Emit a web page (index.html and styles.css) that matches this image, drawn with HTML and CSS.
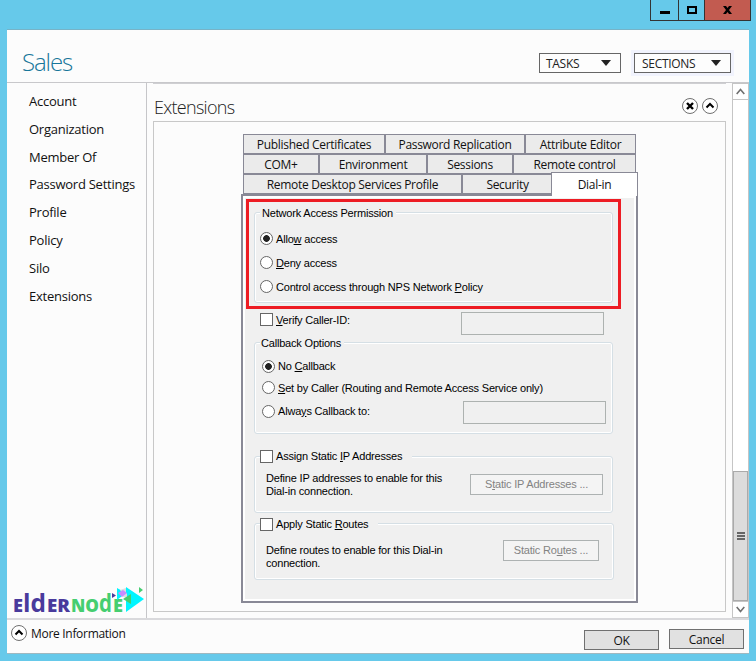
FILE: index.html
```html
<!DOCTYPE html>
<html lang="en">
<head>
<meta charset="utf-8">
<title>Sales</title>
<link rel="stylesheet" href="styles.css">
</head>
<body>
<div class="titlebar">
  <div class="caption min"><svg width="10" height="4"><path d="M0 0h10v3H0z"/></svg></div>
  <div class="caption max"><svg width="10" height="8"><path d="M1 1h8v6h-8z" fill="none" stroke="#000" stroke-width="2"/></svg></div>
  <div class="caption close"><svg width="9" height="8"><path d="M0 0h3l1.500 2L6 0h3L6 4l3 4H6L4.500 6 3 8H0l3-4z"/></svg></div>
</div>
<div class="window">
  <header class="header">
    <h1 class="title">Sales</h1>
    <div class="menu tasks"><span>TASKS</span><i class="arrow"></i></div>
    <div class="menu sections"><span>SECTIONS</span><i class="arrow"></i></div>
  </header>
  <div class="body">
    <nav class="sidebar">
      <a>Account</a><a>Organization</a><a>Member Of</a><a>Password Settings</a><a>Profile</a><a>Policy</a><a>Silo</a><a>Extensions</a>
      <svg class="logo" width="134" height="30" viewBox="0 0 134 30">
        <g class="elder">
          <text x="2" y="25" textLength="10" lengthAdjust="spacingAndGlyphs">E</text>
          <text class="tall" x="12" y="25" textLength="23" lengthAdjust="spacingAndGlyphs">ld</text>
          <text x="36" y="25" textLength="23" lengthAdjust="spacingAndGlyphs">ER</text>
        </g>
        <g class="node">
          <text x="60" y="25" textLength="28" lengthAdjust="spacingAndGlyphs">NO</text>
          <text class="tall" x="88" y="25" textLength="13" lengthAdjust="spacingAndGlyphs">d</text>
          <text x="102" y="25" textLength="10" lengthAdjust="spacingAndGlyphs">E</text>
        </g>
        <path fill="#00f5ff" d="M106 1l9 5-9 7zM115 0l18 12-18 13z"/>
        <path fill="#d8dfe2" d="M109 3l6-2v5l-3 1zM111 9l5-3v6z"/>
        <path fill="#c78cff" d="M107 6l5-3 4 3-5 4z"/>
        <path fill="#45ce70" d="M112 12l8-5v10zM128 0l4 3-4 3z"/>
        <path fill="#493a9c" d="M101 6l4 2.500-4 2.500z"/>
      </svg>
    </nav>
    <main class="content">
      <div class="section-head">
        <h2>Extensions</h2>
        <svg class="round" width="18" height="18"><circle cx="9" cy="9" r="7.500" fill="#fff" stroke="#707070"/><path d="M6 6l6 6M12 6l-6 6" stroke="#000" stroke-width="2.400"/></svg>
        <svg class="round" width="18" height="18"><circle cx="9" cy="9" r="7.500" fill="#fff" stroke="#707070"/><path d="M5.500 10.500L9 7l3.500 3.500" fill="none" stroke="#000" stroke-width="2"/></svg>
      </div>
      <section class="card">
        <div class="tabs">
          <div class="tabrow r1"><div>Published Certificates</div><div>Password Replication</div><div>Attribute Editor</div></div>
          <div class="tabrow r2"><div>COM+</div><div>Environment</div><div>Sessions</div><div>Remote control</div></div>
          <div class="tabrow r3"><div>Remote Desktop Services Profile</div><div>Security</div><div class="active">Dial-in</div></div>
        </div>
        <div class="panel">
          <div class="highlight">
            <div class="group permission">
              <div class="legend">Network Access Permission</div>
              <div class="option"><i class="radio on"></i><span>Allo<u>w</u> access</span></div>
              <div class="option"><i class="radio"></i><span><u>D</u>eny access</span></div>
              <div class="option"><i class="radio"></i><span>Control access through NPS Network <u>P</u>olicy</span></div>
            </div>
          </div>
          <div class="verify"><i class="check"></i><span><u>V</u>erify Caller-ID:</span><div class="field"></div></div>
          <div class="group callback">
            <div class="legend">Callback Options</div>
            <div class="option o1"><i class="radio on"></i><span>No <u>C</u>allback</span></div>
            <div class="option o2"><i class="radio"></i><span><u>S</u>et by Caller (Routing and Remote Access Service only)</span></div>
            <div class="option o3"><i class="radio"></i><span>Alwa<u>y</u>s Callback to:</span><div class="field"></div></div>
          </div>
          <div class="group ip">
            <div class="legend boxed"><i class="check"></i><span>Assign Static <u>I</u>P Addresses</span></div>
            <div class="detail"><p>Define IP addresses to enable for this<br>Dial-in connection.</p><div class="btn off">S<u>t</u>atic IP Addresses ...</div></div>
          </div>
          <div class="group routes">
            <div class="legend boxed"><i class="check"></i><span>Apply Static <u>R</u>outes</span></div>
            <div class="detail"><p>Define routes to enable for this Dial-in<br>connection.</p><div class="btn off">Static Ro<u>u</u>tes ...</div></div>
          </div>
        </div>
      </section>
    </main>
    <div class="scrollbar">
      <div class="sb"><svg width="9" height="7"><path d="M.7 6L4.500 1.500 8.300 6" fill="none" stroke="#707070" stroke-width="1.600"/></svg></div>
      <div class="track"></div>
      <div class="thumb"><i></i><i></i><i></i></div>
      <div class="sb"><svg width="9" height="7"><path d="M.7 1L4.500 5.500 8.300 1" fill="none" stroke="#707070" stroke-width="1.600"/></svg></div>
    </div>
  </div>
  <footer class="footer">
    <svg class="info-icon" width="18" height="18"><circle cx="9" cy="9" r="7.500" fill="#fff" stroke="#707070"/><path d="M5.500 10.500L9 7l3.500 3.500" fill="none" stroke="#000" stroke-width="2"/></svg>
    <span class="info">More Information</span>
    <div class="btn ok">OK</div>
    <div class="btn cancel">Cancel</div>
  </footer>
</div>
</body>
</html>
```
FILE: styles.css
```css
* { box-sizing: border-box; }
body { margin: 0; width: 756px; height: 661px; overflow: hidden; background: #66c9ea; color: #111; font: 12px/16px "Open Sans", sans-serif; letter-spacing: -.3px; }
h1, h2, p { margin: 0; font-weight: 300; }
p { font-weight: 400; }
svg { display: block; }
.titlebar { height: 29px; display: flex; justify-content: flex-end; padding-right: 5px; }
.caption { height: 21px; border: 1px solid #333; border-top: 0; border-right: 0; display: flex; align-items: center; justify-content: center; }
.min { width: 28px; padding-top: 5px; }
.max { width: 26px; }
.close { width: 47px; background: #c25b50; border-right: 1px solid #333; }
.window { width: 742px; height: 625px; margin-left: 7px; background: #fcfcfc; border-top: 1px solid #77b3c7; border-bottom: 1px solid #9fb8c0; }
.header { height: 53px; display: flex; align-items: flex-start; padding-left: 15px; border-bottom: 1px solid #c8c8cb; }
.title { flex: 1; font-size: 24px; line-height: 34px; margin-top: 15px; color: #17769a; letter-spacing: -1.1px; }
.menu { height: 20px; margin-top: 23px; border: 1px solid #666; background: #fdfdfd; display: flex; align-items: center; justify-content: space-between; padding: 0 9px 0 6px; color: #222; }
.tasks { width: 82px; }
.sections { width: 97px; margin: 23px 18px 0 13px; padding-left: 7px; box-shadow: 0 0 0 3px #f1f3fd; }
.arrow { border: 5px solid transparent; border-top: 6px solid #222; border-bottom: 0; }
.menu span { padding-top: 2px; }
.body { height: 535px; display: flex; }
.sidebar { width: 140px; border-right: 1px solid #c6c6c9; padding: 5px 0 0 22px; display: flex; flex-direction: column; }
.sidebar a { height: 27.800px; line-height: 27px; font-size: 13px; letter-spacing: -.25px; white-space: nowrap; }
.logo { margin: 277px 0 0 -18px; flex: none; overflow: visible; font: 800 18px "Open Sans", sans-serif; letter-spacing: 0; }
.logo .tall { font-size: 25px; font-weight: 700; }
.elder { fill: #493a9c; }
.node { fill: #45ce70; }
.content { width: 585px; padding-left: 6px; }
.section-head { width: 573px; height: 38px; border-top: 1px solid #cfcfd2; display: flex; padding: 13px 7px 0 1px; }
.section-head h2 { flex: 1; font-size: 18px; line-height: 22px; margin-top: -1px; color: #222; letter-spacing: -.7px; }
.round { margin-left: 2px; }
.card { width: 573px; height: 491px; border: 1px solid #c8c8c8; padding: 12px 0 0 87px; }
.tabs { width: 397px; padding-left: 2px; height: 60px; }
.tabrow { display: flex; height: 20px; width: 393px; background: #ebebeb; border: 1px solid #898996; }
.tabrow div { flex: none; height: 19px; line-height: 20px; text-align: center; border-left: 2px solid #898996; white-space: nowrap; }
.tabrow div:first-child { border-left: 0; }
.r1 div:nth-child(1) { width: 140px; }
.r1 div:nth-child(2) { width: 140px; }
.r1 div:nth-child(3) { width: 111px; }
.r2 div:nth-child(1) { width: 74px; }
.r2 div:nth-child(2) { width: 108px; }
.r2 div:nth-child(3) { width: 86px; }
.r2 div:nth-child(4) { width: 123px; }
.r3 div:nth-child(1) { width: 217px; }
.r3 div:nth-child(2) { width: 91px; }
.tabrow .active { width: 87px; height: 24px; line-height: 24px; margin: -3px 0 0 -1px; background: #fff; border: 1px solid #898996; border-bottom: 0; position: relative; z-index: 1; }
.panel { width: 397px; height: 409px; border: 2px solid #898996; background: #f0f0f0; box-shadow: inset 0 0 0 2px #fff; padding: 3px; font: 11px/13px "Liberation Sans", sans-serif; color: #000; letter-spacing: -.19px; }
.highlight { width: 375px; height: 110px; border: 3px solid #ed1c24; padding: 10px 0 0 5px; }
.group { width: 359px; border: 1px solid #d5dfe5; border-radius: 3px; box-shadow: inset 0 0 0 1px #fff; margin-left: 8px; }
.permission { height: 91px; margin-left: 0; }
.legend { width: fit-content; height: 14px; margin: -7px 0 0 5px; padding: 0 3px 0 2px; background: #f0f0f0; display: flex; align-items: center; line-height: 14px; white-space: nowrap; }
.option { display: flex; align-items: center; height: 24px; padding-left: 5px; white-space: nowrap; }
.permission .legend { margin-bottom: 6px; }
.permission span { padding-top: 2px; }
.radio { width: 13px; height: 13px; border: 1px solid #666; border-radius: 50%; background: #fff; margin-right: 3px; flex: none; }
.on { background: radial-gradient(circle, #222 3px, #fff 3.700px); }
.check { width: 13px; height: 13px; border: 1px solid #666; background: #fff; margin-right: 3px; flex: none; }
.verify { display: flex; height: 24px; margin: 3px 0 0 14px; padding-top: 1px; }
.verify span { flex: 1; line-height: 15px; }
.field { width: 143px; height: 23px; border: 1px solid #adb2b0; }
.verify .field { margin: -1px 29px 0 0; height: 23px; }
.callback { height: 92px; margin-top: 6px; }
.callback .legend { padding-left: 1px; }
.callback .option { padding-left: 7px; }
.callback .o1 { height: 22px; margin-top: 5px; }
.callback .o2 { height: 21px; }
.callback .o2 span, .callback .o1 span { padding-top: 1px; }
.callback .o3 { height: 26px; padding-right: 6px; }
.o3 span { flex: 1; padding-top: 1px; }
.o3 .field { margin-top: 2px; }
.ip { height: 57px; margin-top: 22px; }
.boxed { margin-top: -8px; padding-right: 10px; padding-left: 0; }
.detail { display: flex; justify-content: space-between; align-items: flex-start; padding: 9px 9px 0 11px; white-space: nowrap; }
.btn { border: 1px solid #707070; background: #e1e1e1; display: flex; align-items: center; justify-content: center; white-space: pre; }
.off { height: 21px; border-color: #adb2b2; background: #f4f4f4; color: #838383; }
.ip .off { width: 133px; margin-top: 2px; }
.routes { width: 360px; height: 57px; margin-top: 10px; }
.routes .legend { margin-top: -7px; }
.routes .detail { padding: 13px 14px 0 11px; }
.routes .off { width: 96px; margin-top: -4px; }
.scrollbar { width: 17px; border-left: 1px solid #c5c5c5; border-right: 1px solid #c5c5c5; background: #fff; }
.sb { height: 17px; border: solid #c5c5c5; border-width: 1px 0; display: flex; align-items: center; justify-content: center; }
.track { height: 371px; }
.thumb { height: 130px; background: #dcdcdc; border: 1px solid #aaa; display: flex; flex-direction: column; align-items: center; justify-content: center; gap: 1px; }
.thumb i { width: 8px; height: 2px; background: #666; }
.footer { height: 35px; border-top: 2px solid #d9d9dc; display: flex; align-items: flex-start; padding-left: 3px; }
.info-icon { margin-top: 4px; }
.info { flex: 1; margin: 6px 0 0 3px; }
.footer .btn { width: 75px; height: 20px; margin-top: 10px; padding-top: 1px; }
.footer .cancel { margin: 9px 5px 0 10px; padding-top: 2px; }
```
